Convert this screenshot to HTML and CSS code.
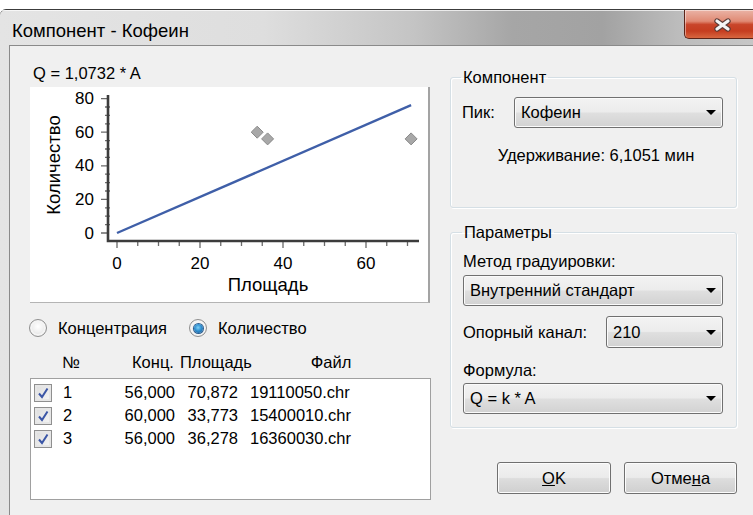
FILE: index.html
```html
<!DOCTYPE html>
<html lang="ru">
<head>
<meta charset="utf-8">
<title>Компонент - Кофеин</title>
<link rel="stylesheet" href="styles.css">
</head>
<body>
<div class="window">
  <div class="titlebar">
    <span class="title">Компонент - Кофеин</span>
    <button class="close" type="button" aria-label="Закрыть">
      <svg width="19" height="14" viewBox="0 0 19 14" aria-hidden="true">
        <path d="M4 3 L15 11 M15 3 L4 11" stroke="#5a3a36" stroke-width="5.4" stroke-linecap="round" fill="none"/>
        <path d="M4 3 L15 11 M15 3 L4 11" stroke="#f4f4f4" stroke-width="3.2" stroke-linecap="round" fill="none"/>
      </svg>
    </button>
  </div>

  <div class="client">
    <div class="left">
      <div class="formula">Q = 1,0732 * A</div>

      <div class="plot">
        <svg width="398" height="215" viewBox="0 0 398 215">
          <!-- minor ticks -->
          <path class="tick" d="
            M75 137.6 H80 M75 129.2 H80 M75 120.8 H80
            M75 104 H80 M75 95.6 H80 M75 87.2 H80
            M75 70.4 H80 M75 62 H80 M75 53.6 H80
            M75 36.8 H80 M75 28.4 H80 M75 20 H80
            M107.75 153 V159 M128.5 153 V159 M149.25 153 V159
            M190.75 153 V159 M211.5 153 V159 M232.25 153 V159
            M273.75 153 V159 M294.5 153 V159 M315.25 153 V159
            M356.75 153 V159 M377.5 153 V159"/>
          <!-- major ticks -->
          <path class="tick" d="
            M71 146 H79 M71 112.4 H79 M71 78.8 H79 M71 45.2 H79 M71 11.6 H79
            M87 153 V161 M170 153 V161 M253 153 V161 M336 153 V161"/>
          <!-- axes -->
          <path class="axis" d="M78 8 V154 H389"/>

          <g class="ylab">
            <text x="64" y="146">0</text>
            <text x="64" y="112.4">20</text>
            <text x="64" y="78.8">40</text>
            <text x="64" y="45.2">60</text>
            <text x="64" y="11.6">80</text>
          </g>
          <g class="xlab">
            <text x="87" y="176">0</text>
            <text x="170" y="176">20</text>
            <text x="253" y="176">40</text>
            <text x="336" y="176">60</text>
          </g>
          <text class="atitle" x="238" y="197">Площадь</text>
          <text class="atitle" x="23" y="78" transform="rotate(-90 23 78)">Количество</text>

          <!-- calibration line Q = 1,0732 * A -->
          <path class="fit" d="M87 146 L381.1 18.2"/>

          <!-- measured points -->
          <path class="pt" d="M381.1 45.9 L387.1 51.9 L381.1 57.9 L375.1 51.9 Z"/>
          <path class="pt" d="M227.2 39.2 L233.2 45.2 L227.2 51.2 L221.2 45.2 Z"/>
          <path class="pt" d="M237.6 45.9 L243.6 51.9 L237.6 57.9 L231.6 51.9 Z"/>
        </svg>
      </div>

      <div class="mode">
        <label class="radio first"><span class="rb"></span>Концентрация</label>
        <label class="radio"><span class="rb on"></span>Количество</label>
      </div>

      <div class="list-head">
        <span class="h-num">№</span>
        <span class="h-conc">Конц.</span>
        <span class="h-area">Площадь</span>
        <span class="h-file">Файл</span>
      </div>

      <div class="list">
        <div class="row">
          <span class="cb"><svg width="12" height="12" viewBox="0 0 12 12"><path d="M2 6.5 L5 10 L10.5 1.5" /></svg></span>
          <span class="c-num">1</span>
          <span class="c-conc">56,000</span>
          <span class="c-area">70,872</span>
          <span class="c-file">19110050.chr</span>
        </div>
        <div class="row">
          <span class="cb"><svg width="12" height="12" viewBox="0 0 12 12"><path d="M2 6.5 L5 10 L10.5 1.5" /></svg></span>
          <span class="c-num">2</span>
          <span class="c-conc">60,000</span>
          <span class="c-area">33,773</span>
          <span class="c-file">15400010.chr</span>
        </div>
        <div class="row">
          <span class="cb"><svg width="12" height="12" viewBox="0 0 12 12"><path d="M2 6.5 L5 10 L10.5 1.5" /></svg></span>
          <span class="c-num">3</span>
          <span class="c-conc">56,000</span>
          <span class="c-area">36,278</span>
          <span class="c-file">16360030.chr</span>
        </div>
      </div>
    </div>

    <div class="right">
      <fieldset class="group g-comp">
        <legend>Компонент</legend>
        <div class="field-row">
          <span class="lbl-peak">Пик:</span>
          <div class="combo grow"><span>Кофеин</span></div>
        </div>
        <div class="retention">Удерживание: 6,1051 мин</div>
      </fieldset>

      <fieldset class="group g-params">
        <legend>Параметры</legend>
        <div class="lbl">Метод градуировки:</div>
        <div class="combo"><span>Внутренний стандарт</span></div>
        <div class="field-row channel">
          <span class="grow">Опорный канал:</span>
          <div class="combo narrow"><span>210</span></div>
        </div>
        <div class="lbl formula-lbl">Формула:</div>
        <div class="combo formula-combo"><span>Q = k * A</span></div>
      </fieldset>

      <div class="buttons">
        <button class="btn ok" type="button"><u>O</u>K</button>
        <button class="btn cancel" type="button">Отме<u>н</u>а</button>
      </div>
    </div>
  </div>
</div>
</body>
</html>
```

FILE: styles.css
```css
* { box-sizing: border-box; }

html, body {
  margin: 0;
  height: 100%;
}

body {
  background: #ffffff;
  font-family: "Liberation Sans", Arial, sans-serif;
  font-size: 16.5px;
  color: #000;
  overflow: hidden;
}

/* ---------- window frame ---------- */
.window {
  margin-top: 9px;
  height: 506px;
  border-top: 1px solid #3c3c3c;
  border-top-left-radius: 6px;
  display: flex;
  flex-direction: column;
  background: linear-gradient(to right, #e4e4e4 0%, #dedede 35%, #c4c4c4 55%, #a6a6a6 68%, #a2a2a2 80%, #bcbcbc 90%, #c6c6c6 100%);
}

.titlebar {
  height: 35px;
  flex: none;
  display: flex;
  align-items: flex-start;
  box-shadow: inset 0 1px 0 rgba(255, 255, 255, 0.7);
}

.title {
  padding: 11px 0 0 12px;
  font-size: 18.5px;
  line-height: 20px;
  color: #000;
}

.close {
  margin-left: auto;
  width: 69px;
  height: 29px;
  padding: 2px 0 0 6px;
  border: 1px solid #5c2418;
  border-top: none;
  border-right: none;
  border-bottom-left-radius: 5px;
  background: linear-gradient(#eab3a6 0%, #e08a74 40%, #c9452a 52%, #c53d20 75%, #d8663f 100%);
  box-shadow: inset 1px 1px 0 rgba(255, 255, 255, 0.45);
  display: flex;
  align-items: center;
  justify-content: center;
}

.close svg { display: block; }

/* ---------- client area ---------- */
.client {
  flex: 1;
  margin-left: 9px;
  border-top: 1px solid #8a8a8a;
  border-left: 1px solid #8a8a8a;
  background: #f0f0f0;
  display: flex;
  gap: 19px;
  padding-left: 20px;
}

.left {
  width: 401px;
  padding-top: 17px;
  display: flex;
  flex-direction: column;
}

.formula {
  line-height: 20px;
  padding-left: 3px;
}

/* ---------- chart ---------- */
.plot {
  margin-top: 4px;
  width: 400px;
  height: 216px;
  background: #fff;
  border-right: 2px solid #a3a3a3;
  border-bottom: 1px solid #b4b4b4;
}

.plot svg { display: block; }

.plot text {
  font-family: "Liberation Sans", Arial, sans-serif;
  fill: #000;
  dominant-baseline: central;
}

.ylab text { font-size: 17px; text-anchor: end; }
.xlab text { font-size: 17px; text-anchor: middle; }
.atitle { font-size: 18.5px; text-anchor: middle; }

.axis {
  fill: none;
  stroke: #3c3c3c;
  stroke-width: 2.6;
}

.tick {
  fill: none;
  stroke: #6a6a6a;
  stroke-width: 1.3;
}

.fit {
  fill: none;
  stroke: #3f5fa8;
  stroke-width: 2.4;
}

.pt {
  fill: #a8a8a8;
  stroke: #8a8a8a;
  stroke-width: 1;
}

/* ---------- mode radios ---------- */
.mode {
  margin-top: 15px;
  height: 20px;
  display: flex;
  align-items: center;
}

.radio {
  display: flex;
  align-items: center;
  gap: 11px;
  line-height: 20px;
}

.radio.first {
  width: 160px;
  margin-left: -1px;
}

.rb {
  position: relative;
  width: 18px;
  height: 18px;
  border-radius: 50%;
  border: 1px solid #8f8f8f;
  background: radial-gradient(circle at 50% 40%, #ffffff 0%, #f0f0f0 45%, #d6d6d6 100%);
  box-shadow: inset 0 0 0 2px #f4f4f4;
}

.rb.on::after {
  content: "";
  position: absolute;
  left: 3.5px;
  top: 3.5px;
  width: 9px;
  height: 9px;
  border-radius: 50%;
  background: radial-gradient(circle at 45% 40%, #7fd0f6 0%, #2f8fd0 45%, #16508a 100%);
  box-shadow: 0 0 0 1px #2b5e91;
}

/* ---------- file list ---------- */
.list-head {
  margin-top: 14px;
  height: 20px;
  line-height: 20px;
  display: flex;
  padding-left: 32px;
}

.h-num { width: 70px; }
.h-conc { width: 48px; }
.h-area { width: 90px; }
.h-file { width: 122px; text-align: center; }

.list {
  margin-top: 6px;
  height: 122px;
  border: 1px solid #a0a0a0;
  background: #fff;
  padding: 2px 0 0 3px;
}

.row {
  height: 23px;
  display: flex;
  align-items: center;
}

.cb {
  width: 18px;
  height: 18px;
  border: 1px solid #8f8f8f;
  background: linear-gradient(135deg, #dcdcdc, #f6f6f6);
  box-shadow: inset 0 0 0 2px #e6e6e6;
  display: flex;
  align-items: center;
  justify-content: center;
}

.cb svg { display: block; }

.cb path {
  fill: none;
  stroke: #3b56a6;
  stroke-width: 2;
}

.c-num { margin-left: 11px; width: 52px; }
.c-conc { width: 60px; text-align: right; }
.c-area { width: 63px; text-align: right; }
.c-file { margin-left: 12px; }

/* ---------- right column ---------- */
.right {
  width: 287px;
  padding-top: 22px;
  display: flex;
  flex-direction: column;
}

.group {
  margin: 0;
  border: 1px solid #d5dfe5;
  border-radius: 3px;
  box-shadow: inset 1px 1px 0 #ffffff, 1px 1px 0 #ffffff;
  min-width: 0;
}

.group legend {
  padding: 0 2px;
  margin-left: -1px;
  line-height: 18px;
}

.g-comp { padding: 11px 13px 43px 11px; }

.g-params {
  margin-top: 15px;
  padding: 11px 13px 13px 12px;
}

.field-row {
  display: flex;
  align-items: center;
}

.lbl-peak { width: 52px; }

.grow { flex: 1; }

.retention {
  margin-top: 18px;
  line-height: 18px;
  text-align: center;
  padding-left: 7px;
}

.lbl { line-height: 18px; }

.combo {
  height: 31px;
  display: flex;
  align-items: center;
  padding: 0 6px 0 6px;
  border: 1px solid #707070;
  border-radius: 3px;
  background: linear-gradient(#f3f3f3 0%, #ececec 48%, #dfdfdf 52%, #d2d2d2 100%);
  box-shadow: inset 0 0 0 1px #fbfbfb;
}

.combo span { flex: 1; white-space: nowrap; }

.combo::after {
  content: "";
  width: 0;
  height: 0;
  border-left: 5px solid transparent;
  border-right: 5px solid transparent;
  border-top: 5px solid #000;
}

.g-params > .combo { margin-top: 5px; }

.channel { margin-top: 10px; }

.combo.narrow { width: 117px; height: 32px; }

.formula-lbl { margin-top: 13px; }

.g-params > .formula-combo { margin-top: 4px; }

/* ---------- dialog buttons ---------- */
.buttons {
  margin-top: 34px;
  display: flex;
  justify-content: flex-end;
  gap: 13px;
}

.btn {
  height: 32px;
  border: 1px solid #707070;
  border-radius: 3px;
  background: linear-gradient(#f2f2f2 0%, #ebebeb 48%, #dddddd 52%, #cfcfcf 100%);
  box-shadow: inset 0 0 0 1px #fcfcfc;
  font: inherit;
  color: #000;
  padding: 0;
}

.btn.ok { width: 114px; }
.btn.cancel { width: 113px; }
```
